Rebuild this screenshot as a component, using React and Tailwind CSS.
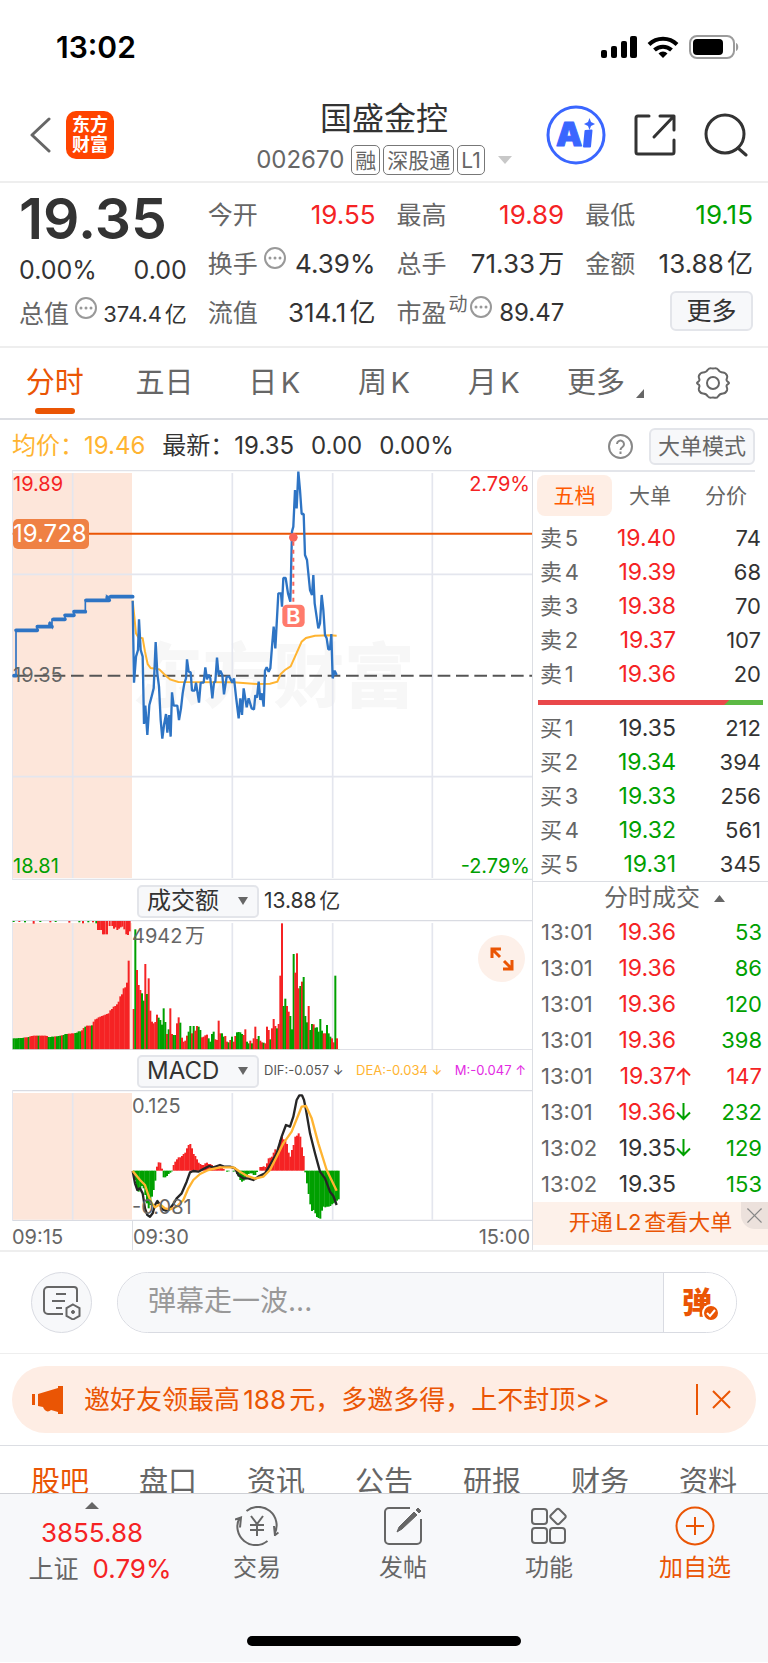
import React from 'react';
import { X } from 'lucide-react';

const RED = '#f52324';
const GREEN = '#00a000';

const quoteColumns = [
    [
        { label: '今开', value: '19.55', tone: 'text-[#f52324]' },
        { label: '换手', value: '4.39%', hint: true },
        { label: '流值', value: '314.1亿' },
    ],
    [
        { label: '最高', value: '19.89', tone: 'text-[#f52324]' },
        { label: '总手', value: '71.33万' },
        { label: '市盈', sup: '动', value: '89.47', hint: true, small: true },
    ],
    [
        { label: '最低', value: '19.15', tone: 'text-[#00a000]' },
        { label: '金额', value: '13.88亿' },
    ],
];

const periods = ['分时', '五日', '日K', '周K', '月K'];

const asks = [
    ['卖5', '19.40', '74'],
    ['卖4', '19.39', '68'],
    ['卖3', '19.38', '70'],
    ['卖2', '19.37', '107'],
    ['卖1', '19.36', '20'],
];

const bids = [
    ['买1', '19.35', '212'],
    ['买2', '19.34', '394'],
    ['买3', '19.33', '256'],
    ['买4', '19.32', '561'],
    ['买5', '19.31', '345'],
];

const trades = [
    { time: '13:01', price: '19.36', qty: '53', up: true },
    { time: '13:01', price: '19.36', qty: '86', up: true },
    { time: '13:01', price: '19.36', qty: '120', up: true },
    { time: '13:01', price: '19.36', qty: '398', up: true },
    { time: '13:01', price: '19.37', qty: '147', up: true, arrow: 'up', buy: true },
    { time: '13:01', price: '19.36', qty: '232', up: true, arrow: 'down' },
    { time: '13:02', price: '19.35', qty: '129', arrow: 'down' },
    { time: '13:02', price: '19.35', qty: '153' },
];

const infoTabs = ['股吧', '盘口', '资讯', '公告', '研报', '财务', '资料'];

// Chart series are in units of a third of a pixel.
const auctionLine = '42,647 48,647 48,511 112,511 112,500 148,500 150,490 156,500 156,478 195,478 195,466 222,466 222,455 256,455 256,421 320,421 320,410 327,421 330,410 398,410';
const auctionSteps = 'M42 647h6M48 511h64M112 500h44M150 490v8M160 478h35M195 466h27M222 455h34M258 421h70M322 411v8M332 410h66';

const priceLine = `398,422 402,668 408,590 414,570 417,478 422,570 428,590 432,792 436,737 442,825 448,735 454,713 461,685 467,546
472,640 477,680 482,780 487,836 492,795 498,762 502,818 507,765 512,830 516,697 521,737 532,737 537,780 543,745 548,700 553,670
558,655 561,598 566,635 572,637 576,692 584,692 588,668 597,728 602,668 611,668 616,622 621,658 626,644 631,655 637,715 642,667
646,665 651,593 656,645 661,632 667,645 672,703 680,650 688,650 697,668 702,655 708,710 716,775 721,715 726,765 731,685 740,742
746,715 755,745 762,748 766,705 771,713 776,665 781,720 786,700 791,740 795,632 800,622 806,635 811,625 816,560 821,500 826,565
835,400 843,400 846,440 850,354 857,354 864,400 871,425 876,215 880,200 885,90 890,145 895,35 900,90 905,162 911,162 915,285
921,300 930,390 936,405 940,345 944,430 955,505 960,490 965,405 970,450 975,525 980,535 985,568 990,568 994,522 998,655 1004,632 1010,645`;

const averageLine = `398,422 403,470 408,520 415,532 428,535 435,575 443,612 452,624 478,628 495,645 510,658 535,666 700,667 770,672
810,671 832,665 842,642 855,630 872,619 885,590 905,545 918,534 945,527 990,526 1010,527`;

const auctionVolume = [
    505, 505, 505, 504, 504, 504, 503, 502, 502, 501, 499, 498, 497, 497, 497, 497, 497, 497, 497, 497, 498, 501, 501, 500,
    500, 499, 499, 498, 497, 496, 495, 492, 492, 491, 491, 490, 490, 489, 488, 484, 484, 481, 474, 470, 467, 467, 467, 466,
    455, 448, 446, 442, 440, 438, 436, 434, 432, 430, 421, 417, 410, 408, 403, 395, 379, 373, 355, 352, 338, 272, 540,
];
const auctionColors = 'gggggggrrgrrrrrgrrrrrggggrgggrgggrrrrggggrrgrrrgrrrrrrrrrrrrrrrrrrrrrrr';
const auctionTop = [
    [38, 156], [55, 156], [72, 157], [98, 161], [118, 156], [148, 157], [164, 156], [205, 158], [235, 157], [246, 160], [262, 157],
    [276, 157], [286, 160], [291, 180], [296, 180], [301, 180], [306, 193], [311, 193], [318, 193], [326, 168], [334, 168],
    [339, 176], [344, 172], [349, 180], [354, 176], [359, 172], [364, 170], [370, 178], [376, 193], [381, 195], [386, 184],
];

const volume = [
    417, 178, 300, 345, 360, 370, 392, 282, 372, 325, 422, 455, 460, 456, 434, 443, 450, 464, 415, 456, 492, 478, 415, 492, 495,
    495, 460, 442, 458, 503, 515, 512, 497, 485, 468, 490, 468, 482, 468, 470, 480, 502, 500, 496, 494, 505, 515, 492, 485, 508,
    510, 452, 490, 490, 500, 498, 515, 517, 510, 500, 515, 498, 487, 486, 487, 492, 495, 478, 515, 520, 512, 520, 505, 470, 507,
    498, 512, 517, 518, 520, 470, 480, 508, 475, 447, 468, 475, 462, 317, 160, 408, 386, 408, 425, 438, 478, 252, 308, 250, 355,
    348, 335, 321, 438, 457, 408, 480, 462, 463, 473, 472, 485, 447, 482, 490, 490, 465, 490, 500, 505, 517, 317, 505, 537,
];
const volumeColors = 'rgrrrggrgrrrrrrgggggrgrrggrrgrrrrggrgrrggrrrrggggrrrrggrrgrgrrggggrrggrgrrrgrrgrrrgrrrgrrrggrrgggrrrgrgggrggrgggggrrgggrrgrg';

const macd = [
    907, 930, 955, 965, 955, 948, 955, 975, 1000, 1015, 1005, 980, 960, 932, 890, 877, 878, 896, 922, 922, 918, 912, 908, 904,
    885, 875, 868, 862, 862, 858, 852, 848, 835, 825, 822, 835, 852, 858, 868, 878, 882, 885, 885, 880, 878, 882, 882, 885, 890,
    892, 890, 890, 892, 894, 897, 902, 905, 904, 902, 902, 905, 903, 912, 920, 930, 935, 932, 928, 915, 912, 910, 910, 915,
    915, 906, 902, 891, 891, 889, 891, 880, 865, 863, 860, 848, 838, 845, 830, 810, 800, 808, 812, 822, 848, 860, 840, 825,
    800, 797, 790, 800, 832, 858, 907, 940, 972, 1003, 1023, 1020, 1030, 1041, 1044, 1046, 1022, 1010, 1012, 1010, 1010, 1008,
    1003, 1000, 996, 992, 988,
];

const difLine = `398,903 405,940 412,960 420,955 428,970 435,1015 442,1035 450,1040 458,1030 465,1005 472,993 480,1005 488,1018
498,1022 508,1018 518,1005 530,985 545,970 560,935 570,907 580,903 595,905 610,897 628,888 640,892 660,885 672,890 690,890
705,895 715,915 730,925 745,925 760,930 775,920 795,910 810,885 830,850 845,800 858,765 870,770 880,740 890,690 898,676 906,676
912,690 918,720 930,790 945,850 960,905 975,925 990,965 1000,978 1010,1005`;

const deaLine = `398,903 420,930 435,945 445,975 455,1000 465,1012 480,1003 495,1015 510,1018 530,1010 550,990 565,955 580,930 600,912
625,900 660,892 700,892 720,905 740,917 765,926 790,920 810,900 830,860 850,820 875,785 895,735 905,710 918,708 935,745 955,820
980,900 1010,962`;

const StatusBar = () => (
    <div className="flex h-[90px] items-center justify-between pl-14 pr-7 pt-1 text-black">
        <span className="text-[30px] font-semibold leading-9">13:02</span>
        <div className="flex items-center gap-[10px]">
            <svg width="36" height="22" viewBox="0 0 36 22" aria-hidden="true">
                <rect x="0" y="14" width="6" height="8" rx="2" />
                <rect x="10" y="10" width="6" height="12" rx="2" />
                <rect x="20" y="5" width="6" height="17" rx="2" />
                <rect x="29" y="0" width="7" height="22" rx="2" />
            </svg>
            <svg width="32" height="22" viewBox="0 0 32 22" fill="none" stroke="#000" strokeWidth="4" aria-hidden="true">
                <path d="M2 8.500a20 20 0 0 1 28 0" />
                <path d="M7.500 14a12.500 12.500 0 0 1 17 0" />
                <path d="M16 22l-4.500-4.600a6.500 6.500 0 0 1 9 0z" fill="#000" stroke="none" />
            </svg>
            <svg width="51" height="24" viewBox="0 0 51 24" aria-hidden="true">
                <rect x="1" y="1" width="44" height="22" rx="7" fill="none" stroke="#9b9b9b" strokeWidth="2" />
                <rect x="4" y="4" width="30" height="16" rx="4" />
                <path d="M47 8c3 1 3 7 0 8z" fill="#9b9b9b" />
            </svg>
        </div>
    </div>
);

const Tag = ({ children }) => (
    <span className="flex h-[30px] items-center rounded-[5px] border border-[#777] px-[3px] text-[21px] leading-none">
        {children}
    </span>
);

const Header = () => (
    <header className="relative flex h-[93px] items-center justify-between border-b-2 border-[#eeeeee] pl-[30px] pr-5 pb-[2px]">
        <div className="flex items-center gap-[15px]">
            <button aria-label="返回">
                <svg width="21" height="36" viewBox="0 0 21 36" fill="none" stroke="#666" strokeWidth="3" strokeLinecap="round" strokeLinejoin="round">
                    <path d="M19 2L2 18l17 16" />
                </svg>
            </button>
            <a href="#home" className="flex h-12 w-12 flex-col items-center justify-center rounded-[10px] bg-[#ff4400] text-[18px] font-bold leading-5 text-white">
                <span>东方</span>
                <span>财富</span>
            </a>
        </div>
        <div className="absolute inset-x-0 top-1 mx-auto flex w-[300px] flex-col items-center">
            <h1 className="text-[32px] leading-[50px] text-[#333]">国盛金控</h1>
            <button className="flex items-center gap-[3px] text-[#666]">
                <span className="pr-1 text-[24px] leading-8">002670</span>
                <Tag>融</Tag>
                <Tag>深股通</Tag>
                <Tag>L1</Tag>
                <svg className="ml-[10px]" width="14" height="8" viewBox="0 0 14 8" fill="#c8c8c8"><path d="M0 0h14L7 8z" /></svg>
            </button>
        </div>
        <div className="flex items-center gap-7">
            <button aria-label="Ai">
                <svg width="60" height="60" viewBox="0 0 60 60">
                    <circle cx="30" cy="30" r="28" fill="#fff" stroke="#3a66ff" strokeWidth="3" />
                    <text x="10" y="41" fontSize="33" fontWeight="900" fill="#3a66ff" stroke="#3a66ff" strokeWidth="1" strokeLinejoin="round" fontFamily="Inter, sans-serif">A</text>
                    <path d="M39.500 26l6-.5-1.500 16h-6z" fill="#3a66ff" stroke="#3a66ff" strokeWidth="2" strokeLinejoin="round" />
                    <path d="M43.500 13l1.500 4 4 2-4 2-1.500 4-1.500-4-4-2 4-2z" fill="#3a66ff" />
                </svg>
            </button>
            <button aria-label="分享">
                <svg width="42" height="42" viewBox="0 0 42 42" fill="none" stroke="#333" strokeWidth="3" strokeLinecap="round" strokeLinejoin="round">
                    <path d="M15 2H4a2 2 0 0 0-2 2v34a2 2 0 0 0 2 2h34a2 2 0 0 0 2-2V26" />
                    <path d="M26 2h14v14M39 3L20 23" />
                </svg>
            </button>
            <button aria-label="搜索">
                <svg width="44" height="44" viewBox="0 0 44 44" fill="none" stroke="#333" strokeWidth="3" strokeLinecap="round">
                    <circle cx="21" cy="21" r="19" />
                    <path d="M34 35l8 7" />
                </svg>
            </button>
        </div>
    </header>
);

const Hint = () => (
    <svg className="mb-3 shrink-0" width="22" height="22" viewBox="0 0 22 22" fill="none" aria-hidden="true">
        <circle cx="11" cy="11" r="10" stroke="#999" strokeWidth="2" />
        <circle cx="6" cy="11" r="1.500" fill="#999" />
        <circle cx="11" cy="11" r="1.500" fill="#999" />
        <circle cx="16" cy="11" r="1.500" fill="#999" />
    </svg>
);

const QuoteCell = ({ item }) => (
    <div className="flex h-[49px] items-center justify-between">
        <dt className="flex items-center gap-[6px] text-[25px] text-[#666]">
            <span>{item.label}</span>
            {item.sup && <span className="-mx-1 mb-4 text-[19px] leading-6">{item.sup}</span>}
            {item.hint && <Hint />}
        </dt>
        <dd className={`${item.small ? 'text-[24px]' : 'text-[26px]'} ${item.tone || 'text-[#333]'}`}>{item.value}</dd>
    </div>
);

const Quote = () => (
    <section className="grid grid-cols-4 gap-x-[21px] border-b-2 border-[#eeeeee] pb-[9px] pl-[19px] pr-[15px] pt-[7px] leading-8">
        <div>
            <div className="flex h-[57px] items-center text-[57px] font-semibold text-[#333]">19.35</div>
            <div className="flex h-[45px] items-center justify-between text-[25px] text-[#333]">
                <span>0.00%</span>
                <span>0.00</span>
            </div>
            <div className="flex h-[43px] items-center justify-between">
                <span className="flex items-center gap-[6px] text-[25px] text-[#666]">
                    总值
                    <Hint />
                </span>
                <span className="text-[22px] text-[#333]">374.4亿</span>
            </div>
        </div>
        {quoteColumns.map((column, i) => (
            <dl key={i}>
                {column.map((item) => (
                    <QuoteCell key={item.label} item={item} />
                ))}
                {i === 2 && (
                    <div className="flex h-[49px] items-center justify-end">
                        <button className="mb-1 h-10 w-[83px] rounded-md border-2 border-[#e3e5ea] bg-[#f7f8fa] text-[25px] leading-8 text-[#333]">更多</button>
                    </div>
                )}
            </dl>
        ))}
    </section>
);

const PeriodTabs = () => (
    <nav className="grid h-[72px] grid-cols-7 border-b-2 border-[#dcdee3] text-[29px] text-[#666]">
        {periods.map((name, i) => (
            <button key={name} className={`relative ${i === 0 ? 'text-[#ea5504]' : ''}`}>
                {name}
                {i === 0 && <span className="absolute bottom-1 left-1/2 h-[6px] w-10 -translate-x-1/2 rounded-full bg-[#ea5504]" />}
            </button>
        ))}
        <button className="flex items-center justify-center gap-[11px] pl-1">
            更多
            <svg className="mt-5" width="8" height="9" viewBox="0 0 8 9" fill="#666"><path d="M8 0v9H0z" /></svg>
        </button>
        <button className="flex items-center justify-center" aria-label="设置">
            <svg width="36" height="34" viewBox="0 0 36 34" fill="none" stroke="#666" strokeWidth="2" strokeLinejoin="round">
                <path d="M13 3.500c1.500-2 3-1 5-1s3.500-1 5 1c1.500 2.500 2.500 3 5 3s3 1 4 3-.5 3-.5 4.500 2.500 2 2.500 3-2.500 1.500-2.500 3 1.500 2.500.5 4.500-1.500 3-4 3-3.500.5-5 3-3 1-5 1-3.500 1-5-1c-1.500-2.500-2.500-3-5-3s-3-1-4-3 .5-3 .5-4.500S2 18 2 17s2.500-1.500 2.500-3S3 11.500 4 9.500s1.500-3 4-3 3.500-.5 5-3z" />
                <circle cx="18" cy="17" r="6" />
            </svg>
        </button>
    </nav>
);

const SummaryBar = () => (
    <div className="flex h-[50px] items-center justify-between pl-3 pr-[13px] pt-[2px] text-[#333]">
        <div className="flex items-center gap-[17px] text-[24px] leading-8">
            <span className="text-[#ffb431]">均价：19.46</span>
            <span>最新：19.35</span>
            <span>0.00</span>
            <span>0.00%</span>
        </div>
        <div className="flex items-center gap-4">
            <button aria-label="帮助">
                <svg width="25" height="25" viewBox="0 0 25 25" fill="none" stroke="#888" strokeWidth="2">
                    <circle cx="12.500" cy="12.500" r="11.500" />
                    <path d="M9 10a3.500 3.500 0 1 1 5.500 3c-1.500 1-2 1.500-2 3M12.500 17.500v2.500" />
                </svg>
            </button>
            <button className="h-[37px] w-[106px] rounded-md border-2 border-[#e3e5ea] bg-[#f7f8fa] text-[22px] leading-none text-[#666]">大单模式</button>
        </div>
    </div>
);

const PriceChart = () => (
    <div className="relative text-[20px] leading-6">
        <svg className="block w-full" viewBox="36 30 1560 1230" fill="none" role="img" aria-label="分时走势">
            <path d="M36 31.500h1560M36 1258h1560" stroke="#e0e2e8" strokeWidth="4" />
            <rect x="38" y="39" width="358" height="1215" fill="#fde6da" />
            <text x="396" y="725" fontSize="212" fontWeight="900" fill="#f7f7f7" fontFamily="'Noto Sans CJK SC', sans-serif">东方财富</text>
            <path d="M218 39v1215M697 39v1215M998 39v1215M1297 39v1215M38 343h1558M38 950h1558" stroke="#e4e6ee" strokeWidth="5" />
            <path d="M37.500 30v1230" stroke="#e4e6ee" strokeWidth="3" />
            <path d="M48 647h1548" stroke="#555" strokeWidth="6" strokeDasharray="38 17" />
            <path d="M38 221h1558" stroke="#ea5504" strokeWidth="6" />
            <polyline points={averageLine} stroke="#ffb431" strokeWidth="6" />
            <polyline points={auctionLine} stroke="#2e74c4" strokeWidth="5" />
            <path d={auctionSteps} stroke="#2e74c4" strokeWidth="11" strokeLinecap="round" />
            <polyline points={priceLine} stroke="#2e74c4" strokeWidth="7" strokeLinejoin="bevel" />
            <path d="M880 245v190" stroke="#f8655a" strokeWidth="6" strokeDasharray="12 12" />
            <circle cx="880" cy="232" r="13" fill="#f8655a" />
            <rect x="847" y="434" width="67" height="67" rx="14" fill="#ff7b6c" />
            <text x="880" y="491" textAnchor="middle" fontSize="66" fontWeight="600" fill="#fff" fontFamily="Inter, sans-serif">B</text>
        </svg>
        <span className="absolute left-[1px] top-[2px] text-[#f52324]">19.89</span>
        <span className="absolute right-[2px] top-[2px] text-[#f52324]">2.79%</span>
        <span className="absolute left-[1px] top-[49px] flex h-[30px] items-center rounded-[5px] bg-[#ef8144] pr-[2px] text-[24px] text-white">19.728</span>
        <span className="absolute left-[1px] top-[193px] text-[#666]">19.35</span>
        <span className="absolute bottom-[2px] left-[1px] text-[#00a000]">18.81</span>
        <span className="absolute bottom-[2px] right-[2px] text-[#00a000]">-2.79%</span>
    </div>
);

const IndicatorSelect = ({ label, options }) => (
    <label className="relative ml-[125px] flex shrink-0 items-center">
        <select aria-label={label} className="h-[33px] w-[122px] appearance-none rounded-[5px] border-2 border-[#e3e5ea] bg-[#f7f8fa] pl-2 text-[24px] leading-7 text-[#333]">
            {options.map((o) => (
                <option key={o}>{o}</option>
            ))}
        </select>
        <svg className="pointer-events-none absolute right-[11px]" width="10" height="8" viewBox="0 0 10 8" fill="#666"><path d="M0 0h10L5 8z" /></svg>
    </label>
);

const VolumeChart = () => (
    <div className="relative text-[20px] leading-6">
        <svg className="block w-full" viewBox="36 150 1560 390" fill="none" role="img" aria-label="成交额">
            <path d="M36 151.500h1560" stroke="#d9dbe2" strokeWidth="4" />
            <rect x="38" y="159" width="358" height="381" fill="#fde6da" />
            <path d="M218 159v380M697 159v380M998 159v380M1297 159v380" stroke="#e4e6ee" strokeWidth="5" />
            <path d="M37.500 150v390" stroke="#e4e6ee" strokeWidth="3" />
            {auctionTop.map(([x, y], i) => (
                <rect key={x} x={x} y="153" width="6" height={y - 153} fill={i < 13 && i % 2 === 0 ? GREEN : RED} />
            ))}
            {auctionVolume.map((y, i) => (
                <rect key={i} x={38 + i * 5} y={y} width="6" height={540 - y} fill={auctionColors[i] === 'g' ? GREEN : RED} />
            ))}
            {volume.map((y, i) => (
                <rect key={i} x={398 + i * 5} y={y} width="6" height={540 - y} fill={volumeColors[i] === 'g' ? GREEN : RED} />
            ))}
            <path d="M36 539h1560" stroke="#d9dbe2" strokeWidth="3" />
        </svg>
        <span className="absolute left-[120px] top-1 text-[#666]">4942万</span>
        <button aria-label="全屏" className="absolute right-[7px] top-[15px] flex h-[47px] w-[47px] items-center justify-center rounded-full bg-[#fdf0e9]">
            <svg width="24" height="24" viewBox="0 0 24 24" fill="none" stroke="#ea5504" strokeWidth="3">
                <path d="M11 2H2v9M2 2l8 8M13 22h9v-9M22 22l-8-8" />
            </svg>
        </button>
    </div>
);

const MacdChart = () => (
    <div className="relative text-[20px] leading-6">
        <svg className="block w-full" viewBox="36 660 1560 393" fill="none" role="img" aria-label="MACD">
            <path d="M36 661.500h1560M36 1051h1560" stroke="#d9dbe2" strokeWidth="4" />
            <rect x="38" y="669" width="358" height="380" fill="#fde6da" />
            <path d="M218 669v380M697 669v380M998 669v380M1297 669v380" stroke="#e4e6ee" strokeWidth="5" />
            <path d="M37.500 660v393" stroke="#e4e6ee" strokeWidth="3" />
            {macd.map((y, i) => (
                <rect key={i} x={398 + i * 5} y={Math.min(y, 902)} width="6" height={Math.abs(y - 902)} fill={y > 902 ? GREEN : RED} />
            ))}
            <polyline points={difLine} stroke="#262626" strokeWidth="7" strokeLinejoin="round" />
            <polyline points={deaLine} stroke="#ffb431" strokeWidth="7" strokeLinejoin="round" />
        </svg>
        <span className="absolute left-[120px] top-1 text-[#666]">0.125</span>
        <span className="absolute bottom-[2px] left-[120px] text-[#666]">-0.081</span>
    </div>
);

const Charts = () => (
    <div className="min-w-0 flex-1 border-r border-[#dcdee3] pl-3">
        <PriceChart />
        <div className="flex h-10 items-center gap-[5px] pt-[2px] text-[21px] text-[#333]">
            <IndicatorSelect label="成交指标" options={['成交额', '成交量']} />
            <span>13.88亿</span>
        </div>
        <VolumeChart />
        <div className="flex h-10 items-center gap-[5px] pt-[2px]">
            <IndicatorSelect label="技术指标" options={['MACD', 'KDJ']} />
            <div className="flex flex-1 justify-between whitespace-nowrap pr-[6px] text-[13px]">
                <span className="text-[#555]">DIF:-0.057 ↓</span>
                <span className="text-[#ffb431]">DEA:-0.034 ↓</span>
                <span className="text-[#e32be3]">M:-0.047 ↑</span>
            </div>
        </div>
        <MacdChart />
        <div className="flex h-[29px] text-[20px] leading-8 text-[#666]">
            <span className="w-[120px]">09:15</span>
            <span className="flex-1 border-l border-[#dcdee3]">09:30</span>
            <span className="pr-[2px]">15:00</span>
        </div>
    </div>
);

const bookTone = (price) => {
    if (price === '19.35') return 'text-[#333]';
    return price > '19.35' ? 'text-[#f52324]' : 'text-[#00a000]';
};

const BookTable = ({ rows }) => (
    <table className="w-full table-fixed">
        <tbody>
            {rows.map(([label, price, qty]) => (
                <tr key={label} className="h-[34px]">
                    <th scope="row" className="w-[62px] p-0 text-left text-[22px] font-normal text-[#666]">{label}</th>
                    <td className={`w-[74px] p-0 text-right text-[23px] ${bookTone(price)}`}>{price}</td>
                    <td className="p-0 text-right text-[#333]">{qty}</td>
                </tr>
            ))}
        </tbody>
    </table>
);

const Arrow = ({ down }) => (
    <svg className={down ? 'text-[#00a000]' : 'rotate-180 text-[#f52324]'} width="15" height="18" viewBox="0 0 15 18" fill="none" stroke="currentColor" strokeWidth="2">
        <path d="M7.500 0v16M1 9.500L7.500 16 14 9.500" />
    </svg>
);

const OrderPanel = () => (
    <aside className="w-[235px] shrink-0 text-[22px] leading-7">
        <div className="mr-[13px] border-t-2 border-[#e3e5ea]" />
        <div className="flex h-[49px] items-center justify-between pb-[2px] pl-1 pr-1 text-[21px] text-[#666]">
            <button className="h-[41px] w-[75px] rounded-lg bg-[#feeee5] text-[#ff5a00]">五档</button>
            <button className="w-[76px]">大单</button>
            <button className="w-[76px]">分价</button>
        </div>
        <div className="px-[7px]">
            <BookTable rows={asks} />
        </div>
        <div className="mx-[5px] mb-[6px] mt-[9px] flex h-[5px] bg-[#5cb944]">
            <svg className="h-full w-[85%]" viewBox="0 0 190 5" preserveAspectRatio="none"><path d="M0 0h190l-5 5H0z" fill="#e9484a" /></svg>
        </div>
        <div className="px-[7px]">
            <BookTable rows={bids} />
        </div>
        <button className="flex h-[33px] w-full items-center justify-center gap-[14px] border-t border-[#dcdee3] pl-7 text-[24px] text-[#666]">
            分时成交
            <svg width="11" height="7" viewBox="0 0 11 7" fill="#666"><path d="M0 7h11L5.500 0z" /></svg>
        </button>
        <div className="pl-2 pr-[6px]">
            <table className="w-full table-fixed">
                <tbody>
                    {trades.map((t, i) => (
                        <tr key={i} className="h-9">
                            <td className="w-[61px] p-0 text-[#666]">{t.time}</td>
                            <td className={`w-[74px] p-0 text-right text-[23px] ${t.up ? 'text-[#f52324]' : 'text-[#333]'}`}>{t.price}</td>
                            <td className="w-[17px] p-0">{t.arrow && <Arrow down={t.arrow === 'down'} />}</td>
                            <td className={`p-0 text-right ${t.buy ? 'text-[#f52324]' : 'text-[#00a000]'}`}>{t.qty}</td>
                        </tr>
                    ))}
                </tbody>
            </table>
        </div>
        <div className="relative flex h-[43px] items-center justify-center bg-[#fdf1ea]">
            <a href="#l2" className="whitespace-nowrap pb-1 text-[#ea5504]">开通L2查看大单</a>
            <button aria-label="关闭" className="absolute right-0 top-0 flex h-[27px] w-[27px] items-center justify-center rounded-bl-[14px] bg-[#ece1dc] text-[#888]">
                <X size={27} strokeWidth={1} />
            </button>
        </div>
    </aside>
);

const DanmuBar = () => (
    <div className="flex h-[104px] items-center justify-between border-b border-t-2 border-[#eeeeee] px-[31px]">
        <button aria-label="弹幕设置" className="flex h-[61px] w-[61px] items-center justify-center rounded-full border border-[#d9dbe2] bg-[#f7f8fa]">
            <svg width="38" height="34" viewBox="0 0 38 34" fill="none" stroke="#666" strokeWidth="2">
                <path d="M20 28H5a4 4 0 0 1-4-4V5a4 4 0 0 1 4-4h26a3 3 0 0 1 3 3v12" />
                <path d="M13 8h10M9 15h13M13 22h6" />
                <path d="M30 18.500l6.500 3.700v7.600L30 33.500l-6.500-3.700v-7.600z" />
                <circle cx="30" cy="26" r="1.500" fill="#666" stroke="#666" strokeWidth="1" />
            </svg>
        </button>
        <div className="ml-[25px] flex h-[61px] flex-1 overflow-hidden rounded-full border border-[#d9dbe2]">
            <input aria-label="弹幕" placeholder="弹幕走一波..." className="min-w-0 flex-1 bg-[#f7f8fa] pb-1 pl-[30px] text-[28px] outline-none placeholder:text-[#999]" />
            <button aria-label="弹幕开关" className="flex w-[73px] items-center justify-center border-l border-[#d9dbe2] bg-white">
                <svg width="38" height="38" viewBox="0 0 38 38">
                    <text x="1" y="29" fontSize="30" fontWeight="900" fill="#ea5504" fontFamily="'Noto Sans CJK SC', sans-serif">弹</text>
                    <circle cx="30" cy="29" r="8" fill="#ea5504" stroke="#fff" strokeWidth="2" />
                    <path d="M26 29l3 3 5-6" fill="none" stroke="#fff" strokeWidth="2" />
                </svg>
            </button>
        </div>
    </div>
);

const InviteBanner = () => (
    <div className="border-b border-[#dcdee3] px-3 py-[12px]">
        <div className="flex h-[67px] items-center rounded-full bg-[#feede4] pl-[20px] pr-[25px] text-[26px] text-[#ea5504]">
            <svg className="mr-5 shrink-0" width="32" height="28" viewBox="0 0 32 28" fill="#ea5504" aria-hidden="true">
                <path d="M0 8h3v11H0zM6 8l20-6V0h5v28h-5v-2l-7-2c-2 2-5 2-7-1l-1-2-5-1z" />
            </svg>
            <a href="#invite" className="flex-1">邀好友领最高188元，多邀多得，上不封顶&gt;&gt;</a>
            <span className="mr-[14px] h-[31px] border-l-2 border-[#ea5504]" />
            <button aria-label="关闭">
                <svg width="19" height="19" viewBox="0 0 19 19" stroke="#ea5504" strokeWidth="2"><path d="M1 1l17 17M18 1L1 18" /></svg>
            </button>
        </div>
    </div>
);

const InfoTabs = () => (
    <nav className="grid h-[47px] grid-cols-7 items-start overflow-hidden px-[6px] pt-4 text-[29px] leading-10 text-[#666]">
        {infoTabs.map((name, i) => (
            <button key={name} className={i === 0 ? 'text-[#ea5504]' : ''}>{name}</button>
        ))}
    </nav>
);

const NavItem = ({ label, active, children }) => (
    <button className={`flex flex-1 flex-col items-center gap-1 ${active ? 'text-[#ea5504]' : 'text-[#666]'}`}>
        <svg width="44" height="40" viewBox="0 0 44 40" fill="none" stroke="currentColor" strokeWidth="2">{children}</svg>
        <span className="text-[24px] leading-9">{label}</span>
    </button>
);

const BottomBar = () => (
    <footer className="h-[169px] border-t border-[#cfd1d6] bg-[#f7f8fa]">
        <div className="flex h-[142px] pt-3">
            <a href="#index" className="flex w-[184px] flex-col items-center text-[26px] leading-9 text-[#f52324]">
                <svg className="-mt-1" width="14" height="7" viewBox="0 0 14 7" fill="#666"><path d="M0 7h14L7 0z" /></svg>
                <span className="pt-[6px]">3855.88</span>
                <span className="flex gap-[14px] pl-4"><span className="text-[25px] text-[#666]">上证</span>0.79%</span>
            </a>
            <NavItem label="交易">
                <path d="M11.500 5a18.500 18.500 0 0 1 28 23M40 30l-1-10M39.500 29.500l4-3M32.500 35a18.500 18.500 0 0 1-28-23M0 13.500l6-2-1 10" />
                <path d="M16 10l6 8 6-8M22 18v12M15 19h14M15 24h14" />
            </NavItem>
            <NavItem label="发帖">
                <path d="M29 2H8a4 4 0 0 0-4 4v28a4 4 0 0 0 4 4h28a4 4 0 0 0 4-4V13" />
                <path d="M16 26l2-5L33 6l3 3-15 14zM35 4l2-2 3 3-2 2z" fill="currentColor" strokeWidth="1" />
            </NavItem>
            <NavItem label="功能">
                <rect x="5" y="3" width="15" height="15" rx="3" />
                <rect x="5" y="22" width="15" height="15" rx="3" />
                <rect x="23" y="22" width="15" height="15" rx="3" />
                <path d="M29.500 3.500q1.500-1.500 3 0l5.500 5.500q1.500 1.500 0 3l-5.500 5.500q-1.500 1.500-3 0L24 12q-1.500-1.500 0-3z" />
            </NavItem>
            <NavItem label="加自选" active>
                <circle cx="22" cy="20" r="18.500" />
                <path d="M22 11v18M13 20h18" />
            </NavItem>
        </div>
        <div className="mx-auto h-[10px] w-[274px] rounded-full bg-black" />
    </footer>
);

const App = () => (
    <div className="w-full bg-white font-['Inter','Noto_Sans_CJK_SC',sans-serif] [text-autospace:normal]">
        <StatusBar />
        <Header />
        <Quote />
        <PeriodTabs />
        <SummaryBar />
        <main className="flex">
            <Charts />
            <OrderPanel />
        </main>
        <DanmuBar />
        <InviteBanner />
        <InfoTabs />
        <BottomBar />
    </div>
);

export default App;
